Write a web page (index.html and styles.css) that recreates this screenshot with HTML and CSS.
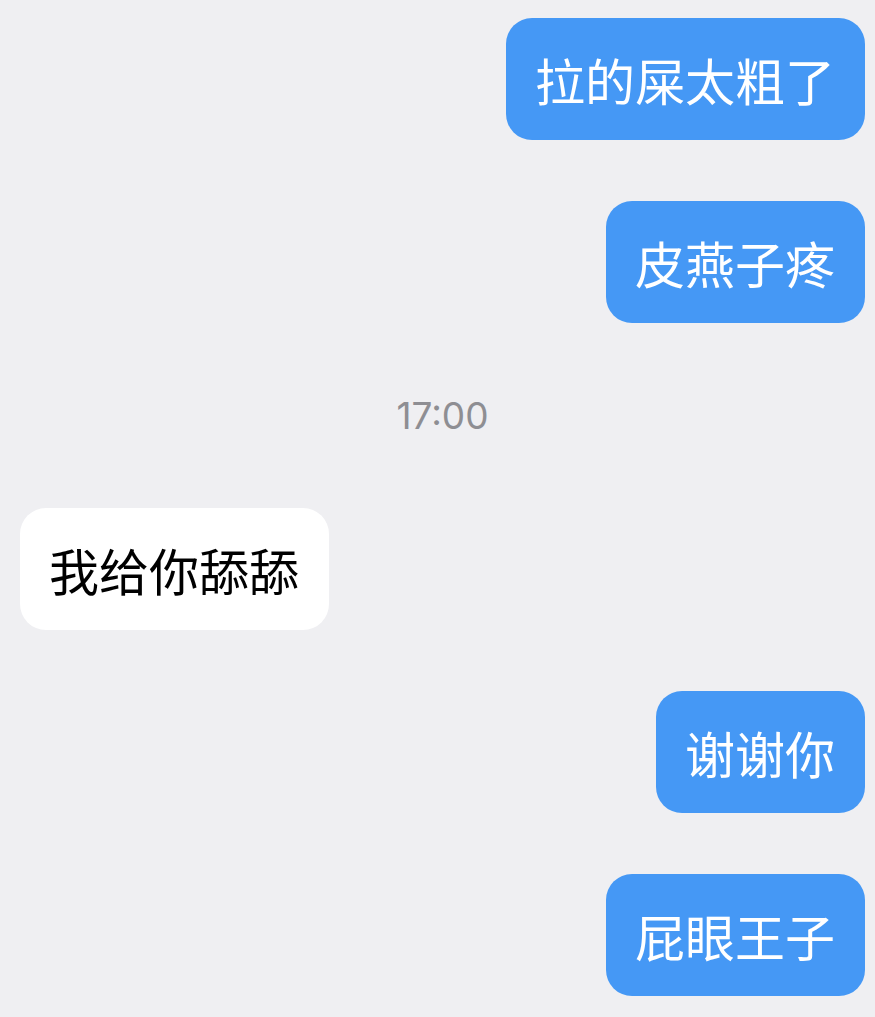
FILE: index.html
```html
<!DOCTYPE html>
<html lang="zh-CN">
<head>
  <meta charset="UTF-8">
  <meta name="viewport" content="width=device-width, initial-scale=1.0">
  <title>聊天</title>
  <link rel="stylesheet" href="styles.css">
</head>
<body>

<div class="chat">
  <div class="msg msg-out"><span class="bubble">拉的屎太粗了</span></div>
  <div class="msg msg-out"><span class="bubble">皮燕子疼</span></div>
  <div class="time">17:00</div>
  <div class="msg msg-in"><span class="bubble">我给你舔舔</span></div>
  <div class="msg msg-out"><span class="bubble">谢谢你</span></div>
  <div class="msg msg-out"><span class="bubble">屁眼王子</span></div>
</div>

</body>
</html>
```

FILE: styles.css
```css
:root {
  --bg-color: #efeff2;
  --out-color: #4598f5;
  --in-color: #ffffff;
  --time-color: #8e8e93;
}

html, body {
  margin: 0;
  padding: 0;
  background-color: var(--bg-color);
}

body {
  font-family: "Noto Sans CJK SC", "Noto Sans", sans-serif;
}

.chat {
  display: flex;
  flex-direction: column;
  gap: 61px;
  padding: 18px 10px 20px 20px;
}

.msg {
  display: flex;
}

.msg-out {
  justify-content: flex-end;
}

.msg-in {
  justify-content: flex-start;
}

.bubble {
  display: block;
  padding: 30px 30px 30px 29px;
  font-size: 50px;
  line-height: 62px;
  border-radius: 26px;
  white-space: nowrap;
}

.msg-out .bubble {
  background-color: var(--out-color);
  color: #fff;
}

.msg-in .bubble {
  background-color: var(--in-color);
  color: #000;
}

.time {
  height: 63px;
  line-height: 63px;
  text-align: center;
  font-family: "Inter", "Noto Sans", sans-serif;
  font-size: 37px;
  color: var(--time-color);
}
```
